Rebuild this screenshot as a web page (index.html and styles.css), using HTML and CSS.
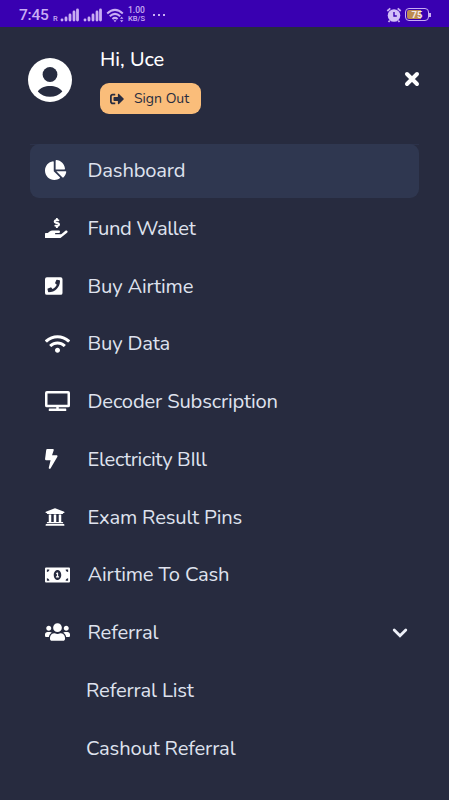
FILE: index.html
```html
<!DOCTYPE html>
<html lang="en">
<head>
    <meta charset="UTF-8">
    <meta name="viewport" content="width=device-width, initial-scale=1.0">
    <title>Menu</title>
    <link rel="stylesheet" href="styles.css">
</head>
<body>
    <!-- Status bar -->
    <div class="status-bar">
        <span class="time">7:45</span>
        <span class="roaming">R</span>
        <svg class="signal" viewBox="0 0 19 14"><path d="M2 11.800v.2M6 10v2M10 7v5M14 4v8M17.500 2v10"/></svg>
        <svg class="signal signal-two" viewBox="0 0 19 14"><path d="M2 11.800v.2M6 10v2M10 7v5M14 4v8M17.500 2v10"/></svg>
        <svg class="status-wifi" viewBox="0 0 19 15">
            <path d="M1.200 5.500Q9 -1.700 16.800 5.500M3.800 8.300Q9 3.500 14.200 8.300M6.400 11Q9 8.800 11.600 11"/>
            <path class="fill" d="M7.500 12.300h3L9 14.200zM14 10.800l1.700-2 1.700 2zM14 12.200l1.700 2 1.700-2z"/>
        </svg>
        <span class="speed"><span>1.00</span><span>KB/S</span></span>
        <span class="dots"><i></i><i></i><i></i></span>
        <svg class="alarm" viewBox="0 0 16 16">
            <circle cx="8" cy="8.500" r="6.300"/>
            <path class="ears" d="M1.300 4L4.300 1.300M14.700 4L11.700 1.300M3.800 13.500L2.500 15M12.200 13.500L13.500 15"/>
            <path class="hands" d="M8 5v4h2.800"/>
        </svg>
        <span class="battery"><span class="battery-body">75</span></span>
    </div>

    <!-- User -->
    <header class="profile">
        <svg class="avatar" viewBox="0 0 44 44">
            <circle cx="22" cy="22" r="22" fill="#fff"/>
            <circle cx="22" cy="16.500" r="7.400" fill="#272c40"/>
            <path fill="#272c40" d="M9.800 33.500C12.500 29.500 17 28 22 28s9.500 1.500 12.300 5.500C31.200 37 27 38.700 22 38.700S12.900 37 9.800 33.500z"/>
        </svg>
        <div class="user">
            <h1 class="greeting">Hi, Uce</h1>
            <button class="sign-out">
                <svg viewBox="0 0 512 512"><path d="M497 273L329 441c-15 15-41 4.500-41-17v-96H152c-13.300 0-24-10.700-24-24v-96c0-13.300 10.700-24 24-24h136V88c0-21.400 25.900-32 41-17l168 168c9.300 9.400 9.300 24.600 0 34zM192 436v-40c0-6.600-5.400-12-12-12H96c-17.700 0-32-14.300-32-32V160c0-17.700 14.300-32 32-32h84c6.600 0 12-5.400 12-12V76c0-6.600-5.400-12-12-12H96c-53 0-96 43-96 96v192c0 53 43 96 96 96h84c6.600 0 12-5.400 12-12z"/></svg>
                <span>Sign Out</span>
            </button>
        </div>
        <svg class="close" viewBox="0 0 16 16"><path d="M3 3l10 10M13 3L3 13"/></svg>
    </header>

    <!-- Menu -->
    <nav class="menu">
        <a class="item active">
            <svg class="icon" viewBox="0 0 640 512"><path d="M527.790 288H290.500l158.030 158.030c6.040 6.040 15.980 6.530 22.190.68 38.700-36.460 65.320-85.610 73.130-140.860 1.340-9.460-6.510-17.850-16.060-17.850zm-15.830-64.800C503.720 103.740 408.260 8.280 288.800.04 279.680-.59 272 7.100 272 16.240V240h223.770c9.140 0 16.820-7.680 16.190-16.800zM224 288V50.710c0-9.550-8.390-17.400-17.840-16.060C86.990 51.490-4.100 155.600.14 280.370 4.500 408.510 114.830 513.590 243.030 511.980c50.400-.63 96.970-16.870 135.260-44.030 7.900-5.600 8.420-17.230 1.570-24.080L224 288z"/></svg>
            <span class="label">Dashboard</span>
        </a>
        <a class="item">
            <svg class="icon" viewBox="0 0 640 512"><path d="M271.060,144.300l54.270,14.300a8.590,8.590,0,0,1,6.630,8.100c0,4.600-4.090,8.400-9.120,8.400h-35.600a30,30,0,0,1-11.190-2.200c-5.240-2.200-11.280-1.700-15.300,2l-19,17.500a11.680,11.680,0,0,0-2.250,2.660,11.420,11.420,0,0,0,3.880,15.740,83.770,83.770,0,0,0,34.510,11.500V240c0,8.800,7.830,16,17.370,16h17.370c9.550,0,17.380-7.200,17.380-16V222.400c32.930-3.600,57.840-31,53.500-63-3.150-23-22.460-41.300-46.560-47.700L282.680,97.400a8.590,8.590,0,0,1-6.630-8.100c0-4.600,4.090-8.400,9.120-8.400h35.600A30,30,0,0,1,332,83.100c5.230,2.200,11.280,1.700,15.300-2l19-17.500A11.310,11.310,0,0,0,368.470,61a11.430,11.430,0,0,0-3.840-15.780,83.820,83.820,0,0,0-34.520-11.500V16c0-8.800-7.820-16-17.370-16H295.370C285.820,0,278,7.200,278,16V33.600c-32.890,3.600-57.850,31-53.510,63C227.630,119.600,247,137.900,271.060,144.300ZM565.270,328.100c-11.800-10.700-30.200-10-42.600,0L430.270,402a63.640,63.640,0,0,1-40,14H272a16,16,0,0,1,0-32h78.290c15.900,0,30.710-10.900,33.250-26.600a31.200,31.200,0,0,0,.46-5.460A32,32,0,0,0,352,320H192a117.660,117.660,0,0,0-74.100,26.290L71.400,384H16A16,16,0,0,0,0,400v96a16,16,0,0,0,16,16H372.770a64,64,0,0,0,40-14L564,377a32,32,0,0,0,1.280-48.900Z"/></svg>
            <span class="label fund">Fund Wallet</span>
        </a>
        <a class="item">
            <svg class="icon" viewBox="0 0 640 512"><path d="M400 32H48A48 48 0 0 0 0 80v352a48 48 0 0 0 48 48h352a48 48 0 0 0 48-48V80a48 48 0 0 0-48-48zM94 416c-7.033 0-13.057-4.873-14.616-11.627l-14.998-65a15 15 0 0 1 8.707-17.160l69.998-29.999a15 15 0 0 1 17.518 4.289l30.997 37.885c48.944-22.963 88.297-62.858 110.781-110.780l-37.886-30.997a15.001 15.001 0 0 1-4.289-17.518l30-69.998a15 15 0 0 1 17.160-8.707l65 14.998A14.997 14.997 0 0 1 384 126c0 160.292-129.945 290-290 290z"/></svg>
            <span class="label">Buy Airtime</span>
        </a>
        <a class="item">
            <svg class="icon" viewBox="0 0 640 512"><path d="M634.910 154.880C457.740-8.990 182.190-8.930 5.090 154.880c-6.660 6.160-6.790 16.590-.35 22.980l34.240 33.970c6.140 6.100 16.020 6.230 22.400.38 145.920-133.680 371.300-133.710 517.250 0 6.380 5.850 16.260 5.710 22.400-.38l34.240-33.970c6.430-6.390 6.300-16.820-.36-22.980zM320 352c-35.350 0-64 28.650-64 64s28.650 64 64 64 64-28.650 64-64-28.650-64-64-64zm202.670-83.590c-115.260-101.930-290.210-101.820-405.340 0-6.900 6.100-7.120 16.690-.57 23.150l34.440 33.990c6 5.920 15.660 6.320 22.050.8 83.950-72.570 209.740-72.410 293.490 0 6.390 5.520 16.050 5.130 22.050-.8l34.440-33.990c6.560-6.460 6.330-17.060-.56-23.150z"/></svg>
            <span class="label">Buy Data</span>
        </a>
        <a class="item">
            <svg class="icon" viewBox="0 0 640 512"><path d="M592 0H48A48 48 0 0 0 0 48v320a48 48 0 0 0 48 48h240v32H112a16 16 0 0 0-16 16v32a16 16 0 0 0 16 16h416a16 16 0 0 0 16-16v-32a16 16 0 0 0-16-16H352v-32h240a48 48 0 0 0 48-48V48a48 48 0 0 0-48-48zm-16 352H64V64h512z"/></svg>
            <span class="label">Decoder Subscription</span>
        </a>
        <a class="item">
            <svg class="icon" viewBox="0 0 640 512"><path d="M296 160H180.600l42.600-129.800C227.200 15 215.700 0 200 0H56C44 0 33.800 8.900 32.200 20.800l-32 240C-1.700 275.200 9.500 288 24 288h118.700L96.600 482.500c-3.600 15.200 8 29.500 23.300 29.500 8.400 0 16.400-4.400 20.800-12l176-304c9.300-15.900-2.200-36-20.700-36z"/></svg>
            <span class="label electricity">Electricity BIll</span>
        </a>
        <a class="item">
            <svg class="icon" viewBox="0 0 640 512"><path d="M496 128v16a8 8 0 0 1-8 8h-24v12c0 6.627-5.373 12-12 12H60c-6.627 0-12-5.373-12-12v-12H24a8 8 0 0 1-8-8v-16a8 8 0 0 1 4.941-7.392l232-88a7.996 7.996 0 0 1 6.118 0l232 88A8 8 0 0 1 496 128zm-24 304H40c-13.255 0-24 10.745-24 24v16a8 8 0 0 0 8 8h464a8 8 0 0 0 8-8v-16c0-13.255-10.745-24-24-24zM96 192v192H60c-6.627 0-12 5.373-12 12v20h416v-20c0-6.627-5.373-12-12-12h-36V192h-64v192h-64V192h-64v192h-64V192H96z"/></svg>
            <span class="label">Exam Result Pins</span>
        </a>
        <a class="item">
            <svg class="icon" viewBox="0 0 640 512"><path d="M352 288h-16v-88c0-4.420-3.580-8-8-8h-13.580c-4.740 0-9.370 1.400-13.310 4.030l-15.330 10.220a7.994 7.994 0 0 0-2.220 11.090l8.880 13.310a7.994 7.994 0 0 0 11.090 2.220l.47-.31V288h-16c-4.420 0-8 3.580-8 8v16c0 4.420 3.580 8 8 8h64c4.420 0 8-3.580 8-8v-16c0-4.420-3.580-8-8-8zM608 64H32C14.330 64 0 78.330 0 96v320c0 17.670 14.330 32 32 32h576c17.670 0 32-14.330 32-32V96c0-17.670-14.330-32-32-32zM48 400v-64c35.350 0 64 28.650 64 64H48zm0-224v-64h64c0 35.350-28.650 64-64 64zm272 208c-53.020 0-96-57.310-96-128s42.980-128 96-128 96 57.310 96 128-42.980 128-96 128zm272 16h-64c0-35.350 28.650-64 64-64v64zm0-224c-35.350 0-64-28.650-64-64h64v64z"/></svg>
            <span class="label">Airtime To Cash</span>
        </a>
        <a class="item">
            <svg class="icon" viewBox="0 0 640 512"><path d="M96 224c35.300 0 64-28.700 64-64s-28.700-64-64-64-64 28.700-64 64 28.700 64 64 64zm448 0c35.300 0 64-28.700 64-64s-28.700-64-64-64-64 28.700-64 64 28.700 64 64 64zm32 32h-64c-17.600 0-33.500 7.100-45.100 18.600 40.300 22.100 68.900 62 75.100 109.400h66c17.700 0 32-14.300 32-32v-32c0-35.300-28.700-64-64-64zm-256 0c61.900 0 112-50.100 112-112S381.900 32 320 32 208 82.100 208 144s50.100 112 112 112zm76.800 32h-8.300c-20.800 10-43.900 16-68.500 16s-47.600-6-68.500-16h-8.300C179.600 288 128 339.600 128 403.200V432c0 26.500 21.500 48 48 48h288c26.500 0 48-21.500 48-48v-28.800c0-63.600-51.600-115.200-115.200-115.200zm-223.700-13.400C161.500 263.100 145.600 256 128 256H64c-35.300 0-64 28.700-64 64v32c0 17.700 14.300 32 32 32h65.900c6.300-47.400 34.900-87.300 75.200-109.400z"/></svg>
            <span class="label">Referral</span>
            <svg class="chevron" viewBox="0 0 16 12"><path d="M2.200 3L8 8.800 13.800 3"/></svg>
        </a>
        <a class="item sub-item"><span class="label">Referral List</span></a>
        <a class="item sub-item"><span class="label">Cashout Referral</span></a>
    </nav>
</body>
</html>
```

FILE: styles.css
```css
* {
    box-sizing: border-box;
}
body {
    margin: 0;
    height: 800px;
    overflow: hidden;
    background-color: #272b3f;
    color: #dfe2ee;
    font-family: Nunito, Lato, sans-serif;
}

/* ========== Status bar ========== */
.status-bar {
    display: flex;
    align-items: center;
    height: 27px;
    padding: 3px 18px 0 19px;
    background-color: #3900b1;
    color: #c9adf3;
    font-family: Roboto, sans-serif;
}
.time {
    width: 34px;
    font-size: 15.5px;
    font-weight: 500;
    letter-spacing: -0.2px;
}
.roaming {
    width: 7px;
    padding-top: 6px;
    font-size: 7.5px;
    font-weight: 500;
}
.signal {
    width: 19px;
    height: 14px;
    fill: none;
    stroke: #c9adf3;
    stroke-width: 2.8;
    stroke-linecap: round;
}
.signal-two {
    margin-left: 4px;
}
.status-wifi {
    width: 19px;
    height: 15px;
    margin-left: 4px;
    fill: none;
    stroke: #c9adf3;
    stroke-width: 2;
}
.status-wifi .fill {
    fill: #c9adf3;
    stroke: none;
}
.speed {
    display: flex;
    flex-direction: column;
    width: 19px;
    margin: -1px 0 0 3px;
    font-size: 7.5px;
    font-weight: 500;
    line-height: 7.5px;
}
.speed span:first-child {
    font-size: 8.5px;
}
.dots {
    display: flex;
    gap: 3px;
    margin-left: 6px;
}
.dots i {
    width: 2px;
    height: 2px;
    background: #c9adf3;
}
.alarm {
    width: 16px;
    height: 16px;
    margin-left: auto;
    fill: #d3c0f7;
}
.alarm .ears,
.alarm .hands {
    fill: none;
    stroke: #c9adf3;
    stroke-width: 1.8;
}
.alarm .hands {
    stroke: #3900b1;
    stroke-width: 1.4;
}
.battery {
    display: flex;
    align-items: center;
    margin: -1px 0 0 3px;
}
.battery::after {
    content: "";
    width: 2px;
    height: 4px;
    background: #c9adf3;
}
.battery-body {
    width: 24px;
    height: 13px;
    border: 1px solid #c9adf3;
    border-radius: 4px;
    background: linear-gradient(90deg, #bd8b50 70%, transparent 70%) content-box;
    padding: 1px;
    color: #f3e8e8;
    font-size: 9.5px;
    font-weight: bold;
    line-height: 10px;
    text-align: center;
}

/* ========== User ========== */
.profile {
    display: flex;
    align-items: flex-start;
    height: 116.5px;
    padding: 0 29px 0 28px;
}
.avatar {
    width: 44px;
    height: 44px;
    margin-top: 31px;
}
.user {
    margin: 20px 0 0 28px;
}
.greeting {
    margin: 0;
    color: #fff;
    font-size: 20px;
    font-weight: 500;
    line-height: 26px;
}
.sign-out {
    display: flex;
    align-items: center;
    gap: 10px;
    width: 101px;
    height: 31px;
    margin-top: 10px;
    padding: 0 10px;
    border: none;
    border-radius: 9px;
    background-color: #fabd7a;
    color: #272c40;
    font-family: inherit;
    font-size: 14px;
    white-space: nowrap;
}
.sign-out svg {
    width: 14px;
    height: 14px;
    flex: none;
    fill: #272c40;
}
.close {
    width: 16px;
    height: 16px;
    margin: 43.5px 0 0 auto;
    fill: none;
    stroke: #fff;
    stroke-width: 4;
    stroke-linecap: round;
}

/* ========== Menu ========== */
.menu {
    display: flex;
    flex-direction: column;
    gap: 3.25px;
    margin: 0 30px;
    border-top: 1px solid #2c324a;
}
.item {
    display: flex;
    align-items: center;
    height: 54.5px;
    padding: 0 11px 0 15px;
    border-radius: 9px;
}
.item.active {
    margin-top: -1px;
    background-color: #2f3750;
}
.icon {
    width: 25px;
    height: 20px;
    margin: 0 17.5px 1px 0;
    fill: #fff;
}
.label {
    padding-top: 0.5px;
    font-size: 20.2px;
    letter-spacing: -0.17px;
    line-height: 26px;
    white-space: nowrap;
}
.label.fund {
    letter-spacing: -0.38px;
}
.label.electricity {
    letter-spacing: -0.33px;
}
.chevron {
    width: 16px;
    height: 12px;
    margin-left: auto;
    fill: none;
    stroke: #eef0f8;
    stroke-width: 2.8;
    stroke-linecap: round;
}
.sub-item {
    padding-left: 56px;
}
```
